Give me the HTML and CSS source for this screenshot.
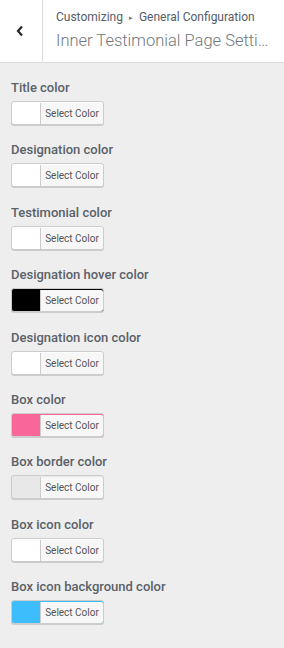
FILE: index.html
```html
<!DOCTYPE html>
<html>
<head>
<meta charset="utf-8">
<link rel="stylesheet" href="styles.css">
</head>
<body>
<div class="header">
  <button class="back" aria-label="Back">
    <svg width="10" height="14" viewBox="0 0 10 14"><path d="M7 2.5 L3 7 L7 11.5" fill="none" stroke="#23282d" stroke-width="2.2"/></svg>
  </button>
  <div class="titles">
    <div class="crumb">Customizing <span class="sep">▸</span> General Configuration</div>
    <div class="title">Inner Testimonial Page Settings</div>
  </div>
</div>
<div class="controls">
  <div class="control"><div class="label">Title color</div><button class="color-btn sw-white"><span class="txt">Select Color</span></button></div>
  <div class="control"><div class="label">Designation color</div><button class="color-btn sw-white"><span class="txt">Select Color</span></button></div>
  <div class="control"><div class="label">Testimonial color</div><button class="color-btn sw-white"><span class="txt">Select Color</span></button></div>
  <div class="control"><div class="label">Designation hover color</div><button class="color-btn sw-black"><span class="txt">Select Color</span></button></div>
  <div class="control"><div class="label">Designation icon color</div><button class="color-btn sw-white"><span class="txt">Select Color</span></button></div>
  <div class="control"><div class="label">Box color</div><button class="color-btn sw-pink"><span class="txt">Select Color</span></button></div>
  <div class="control"><div class="label">Box border color</div><button class="color-btn sw-light"><span class="txt">Select Color</span></button></div>
  <div class="control"><div class="label">Box icon color</div><button class="color-btn sw-white"><span class="txt">Select Color</span></button></div>
  <div class="control"><div class="label">Box icon background color</div><button class="color-btn sw-blue"><span class="txt">Select Color</span></button></div>
</div>
</body>
</html>
```
FILE: styles.css
```css
html, body {
  margin: 0;
  padding: 0;
  background: #eeeeee;
  font-family: "Roboto", "Open Sans", sans-serif;
}
.header {
  display: flex;
  height: 62px;
  background: #fff;
  border-bottom: 1px solid #dddddd;
}
.back {
  width: 43px;
  flex: none;
  border: 0;
  border-right: 1px solid #dddddd;
  background: #fff;
  padding: 0;
  display: flex;
  align-items: center;
  justify-content: center;
  margin: 0;
}
.back svg { margin-right: 2px; }
.titles {
  flex: 1;
  min-width: 0;
  padding: 8px 10px 0 13px;
}
.crumb {
  font-size: 12px;
  line-height: 18px;
  color: #555d66;
  white-space: nowrap;
}
.crumb .sep {
  font-size: 7px;
  vertical-align: 1px;
  margin: 0 3px;
  color: #72777c;
}
.title {
  font-size: 16.5px;
  font-weight: 300;
  line-height: 26px;
  margin-top: 1px;
  color: #72777c;
  white-space: nowrap;
  overflow: hidden;
  text-overflow: ellipsis;
}
.controls {
  padding: 15px 11px 0 11px;
}
.control {
  height: 62.375px;
}
.label {
  font-size: 13px;
  font-weight: 500;
  line-height: 20px;
  height: 23px;
  color: #5a6169;
  white-space: nowrap;
}
.color-btn {
  display: block;
  height: 24px;
  width: 93px;
  margin: 0;
  padding: 0 0 0 28px;
  border: 1px solid #cccccc;
  border-radius: 3px;
  box-shadow: 0 1px 0 #cccccc;
  box-sizing: border-box;
  font-family: inherit;
}
.color-btn .txt {
  display: block;
  margin-top: 1px;
  height: 21px;
  line-height: 21px;
  background: #f7f7f7;
  border-left: 1px solid #cccccc;
  border-radius: 0 2px 2px 0;
  font-size: 10px;
  color: #555555;
  text-align: center;
}
.sw-white { background: #ffffff; }
.sw-black { background: #000000; }
.sw-pink { background: #f8669a; }
.sw-light { background: #e8e8e8; }
.sw-blue { background: #3dbdfb; }
```
